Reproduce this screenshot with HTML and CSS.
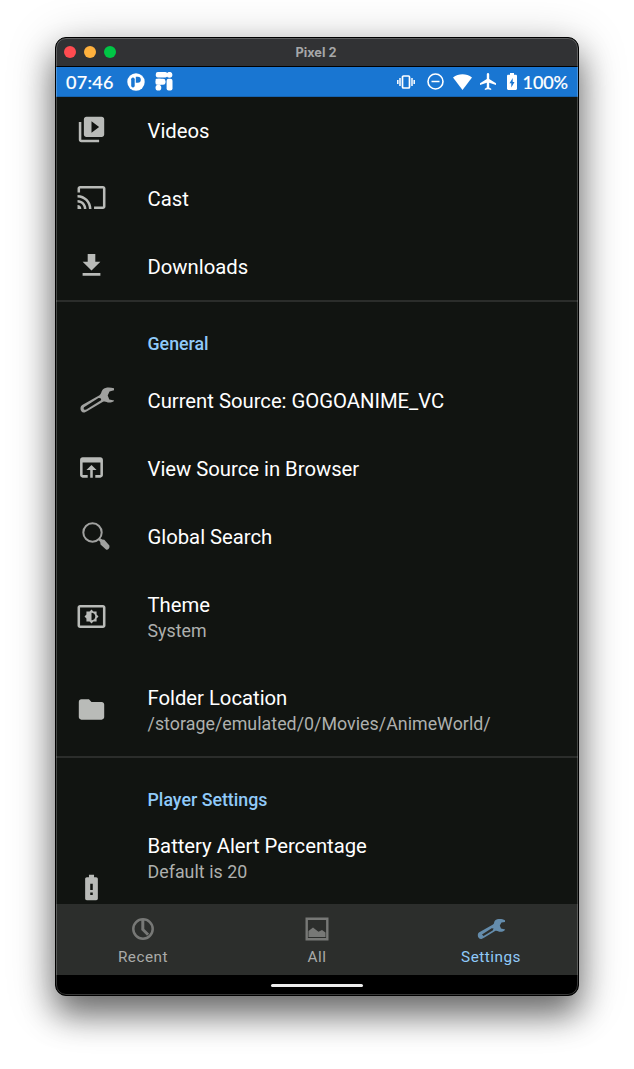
FILE: index.html
```html
<!DOCTYPE html>
<html lang="en">
<head>
<meta charset="utf-8">
<title>Pixel 2</title>
<link rel="stylesheet" href="styles.css">
</head>
<body>
<div class="window">
  <header class="titlebar">
    <div class="lights"><i class="red"></i><i class="amber"></i><i class="green"></i></div>
    <span class="title">Pixel 2</span>
  </header>
  <div class="status">
    <span class="clock">07:46</span>
    <svg class="s-app" width="18" height="18" viewBox="0 0 18 18"><circle cx="9" cy="9" r="8.7" fill="#fff"/><rect x="4.200" y="4.500" width="3.500" height="10" rx="1.700" fill="#1976d2"/><path d="M8.800 3.800h2a3 3 0 0 1 0 6H8.800z" fill="#1976d2"/></svg>
    <svg class="s-pi" width="18" height="19" viewBox="0 0 18 19" fill="#fff"><rect x=".8" y="0" width="11.500" height="5.600" rx="2"/><circle cx="14.500" cy="2.800" r="2.900"/><rect x=".8" y="6.800" width="9.700" height="6" rx="2.400"/><rect x=".6" y="6.800" width="5.600" height="5.800" rx="1"/><circle cx="3.400" cy="15.700" r="2.900"/><rect x="11.600" y="6.800" width="5.900" height="11.700" rx="2"/></svg>
    <span class="spacer"></span>
    <svg class="s-vib" width="18" height="16" viewBox="0 0 18 16" fill="none" stroke="#fff"><rect x="5.500" y="2" width="7" height="12" rx="1" stroke-width="1.700"/><path d="M3 4v8M15 4v8M.8 6v4M17.200 6v4" stroke-width="1.500"/></svg>
    <svg class="s-dnd" width="17" height="17" viewBox="0 0 17 17" fill="none" stroke="#fff" stroke-width="1.600"><circle cx="8.500" cy="8.500" r="7.500"/><path d="M4.500 8.500h8"/></svg>
    <svg class="s-wifi" width="19" height="16" viewBox="0 0 19 16" fill="#fff"><path d="M9.500 16 0 3.500C5.500-.8 13.500-.8 19 3.500z"/></svg>
    <svg class="s-air" width="16" height="17" viewBox="2 2 20 20" preserveAspectRatio="none" fill="#fff"><path d="M22 16v-2l-8.500-5V3.500C13.500 2.700 12.800 2 12 2s-1.500.7-1.500 1.500V9L2 14v2l8.500-2.500V19L8 20.500V22l4-1 4 1v-1.500L13.500 19v-5.500z"/></svg>
    <svg class="s-bat" width="10" height="17" viewBox="7 2 10 20" preserveAspectRatio="none" fill="#fff"><path d="M15.670 4H14V2h-4v2H8.330C7.600 4 7 4.600 7 5.330v15.330C7 21.400 7.600 22 8.330 22h7.330c.74 0 1.340-.6 1.340-1.330V5.330C17 4.600 16.400 4 15.670 4zM11.300 19v-4.800H9.500L12.700 8v4.700h1.800L11.300 19z"/></svg>
    <span class="pct">100%</span>
  </div>
  <main class="list">
    <section>
      <div class="row"><svg class="ic" viewBox="-.2 -.2 24.4 24.4"><path d="M4 6H2v14c0 1.100.9 2 2 2h14v-2H4V6zm16-4H8c-1.100 0-2 .9-2 2v12c0 1.100.9 2 2 2h12c1.100 0 2-.9 2-2V4c0-1.100-.9-2-2-2zm-8 12.500v-9l6 4.500-6 4.500z"/></svg><p class="name">Videos</p></div>
      <div class="row"><svg class="ic" viewBox="-.2 -.2 24.4 24.4"><path d="M21 3H3c-1.100 0-2 .9-2 2v3h2V5h18v14h-7v2h7c1.100 0 2-.9 2-2V5c0-1.100-.9-2-2-2zM1 18v3h3c0-1.660-1.340-3-3-3zm0-4v2c2.760 0 5 2.240 5 5h2c0-3.870-3.130-7-7-7zm0-4v2c4.970 0 9 4.030 9 9h2c0-6.080-4.930-11-11-11z"/></svg><p class="name">Cast</p></div>
      <div class="row"><svg class="ic" viewBox="-.2 -.2 24.4 24.4"><path d="M19 9h-4V3H9v6H5l7 7 7-7zM5 18v2h14v-2z"/></svg><p class="name">Downloads</p></div>
    </section>
    <section class="ruled">
      <h2>General</h2>
      <div class="row"><svg class="wrench" width="35" height="26" viewBox="0 0 35 26"><path fill-rule="evenodd" d="M34 1.300C30 .2 25.500 0 22.800 2.500 21 4.500 21.500 7 19.500 8.200L2.200 18C-1 20 .5 26.300 4.500 25.500L7 24.300 23 14.700C25.500 13.800 27 15.500 29 15.500 31.500 15.500 33.500 15 34.200 13.500L29.300 12.500 27.700 8.500 29.500 4.500 34 3.200zM4 20.300 18.500 11Q21.800 10.800 21 13.300L6.300 22.400Q2.700 23.500 4 20.300z"/></svg><p class="name">Current Source: GOGOANIME_VC</p></div>
      <div class="row"><svg class="ic" viewBox="-.2 -.2 24.4 24.4"><path d="M19 4H5c-1.110 0-2 .9-2 2v12c0 1.100.89 2 2 2h4v-2H5V8h14v10h-4v2h4c1.100 0 2-.9 2-2V6c0-1.100-.89-2-2-2zm-7 6l-4 4h3v6h2v-6h3l-4-4z"/></svg><p class="name">View Source in Browser</p></div>
      <div class="row"><svg class="magnifier" width="28" height="28" viewBox="0 0 28 28"><circle cx="10.500" cy="10.500" r="9.200" fill="none" stroke="#a0a19f" stroke-width="2"/><path d="M16 17.200 17.500 16 20.300 17.500 22.300 17.800 27.400 23.500C28 26 26.300 27.900 24.300 27.700L18.500 22.500 18.200 20z"/></svg><p class="name">Global Search</p></div>
      <div class="row tall"><svg class="ic" viewBox="-.2 -.2 24.4 24.4"><path d="M21 3H3c-1.100 0-2 .9-2 2v14c0 1.100.9 2 2 2h18c1.100 0 2-.9 2-2V5c0-1.100-.9-2-2-2zm0 16.010H3V4.990h18v14.020zM8 16h2.500l1.500 1.500 1.500-1.500H16v-2.500l1.500-1.500-1.500-1.500V8h-2.500L12 6.500 10.500 8H8v2.500L6.500 12 8 13.500V16zm4-7c1.660 0 3 1.340 3 3s-1.340 3-3 3V9z"/></svg><div><p class="name">Theme</p><p class="sub">System</p></div></div>
      <div class="row tall"><svg class="ic" viewBox="-.2 -.2 24.4 24.4"><path d="M10 4H4c-1.100 0-1.990.9-1.990 2L2 18c0 1.100.9 2 2 2h16c1.100 0 2-.9 2-2V8c0-1.100-.9-2-2-2h-8l-2-2z"/></svg><div><p class="name">Folder Location</p><p class="sub">/storage/emulated/0/Movies/AnimeWorld/</p></div></div>
    </section>
    <section class="ruled">
      <h2>Player Settings</h2>
      <div class="row alert"><svg class="ic" viewBox="-.2 -.2 24.4 24.4"><path d="M15.670 4H14V2h-4v2H8.330C7.600 4 7 4.600 7 5.330v15.330C7 21.400 7.600 22 8.330 22h7.330c.74 0 1.340-.6 1.340-1.330V5.330C17 4.600 16.400 4 15.670 4zM13 18h-2v-2h2v2zm0-4h-2V9h2v5z"/></svg><div><p class="name">Battery Alert Percentage</p><p class="sub">Default is 20</p></div></div>
    </section>
  </main>
  <nav class="tabs">
    <div class="tab"><svg width="24" height="24" viewBox="0 0 24 24" fill="none" stroke="#777876"><circle cx="12" cy="12" r="9.700" stroke-width="2.500"/><path d="M11.800 3v9.500l5.300 5.300" stroke-width="3"/></svg><span>Recent</span></div>
    <div class="tab"><svg width="24" height="24" viewBox="0 0 24 24"><path d="M1.700 1.700h20.600v20.600H1.700z" fill="none" stroke="#777876" stroke-width="2.400"/><path d="M3.500 20V14L8 10.500 10.500 12.500 13.500 14.800 17 13 20.500 15.500V20z" fill="#777876"/></svg><span>All</span></div>
    <div class="tab active"><svg width="29" height="24" viewBox="0 0 29 24"><path fill="#648cac" fill-rule="evenodd" d="M28 3.200C25 1.500 20 1.600 18.300 3.200 16.800 4.500 17.500 6.500 16 7.500L2.300 15.200C-.5 17 .8 22.400 4.500 22L7 20.800 18.500 13.800C20.500 13.300 21.500 15 23.500 14.800 25.500 14.800 27.500 14.200 28.200 12.500L24 11.500 22.800 8.500 24.500 5.500 28 5zM5 17.400 14.700 11.200 16.600 11.600 15.700 13.400 6.500 19z"/></svg><span>Settings</span></div>
  </nav>
  <footer class="gesture"><i></i></footer>
</div>
</body>
</html>
```
FILE: styles.css
```css
* { box-sizing: border-box; }
body { margin: 0; background: #fff; font-family: Roboto, "Liberation Sans", sans-serif; height: 1069px; overflow: hidden; padding: 37px 55px 0; }
p, h2 { margin: 0; font-weight: 400; white-space: nowrap; }
svg { display: block; flex: none; }
.window { width: 524px; height: 959px; border: 1px solid #000; border-radius: 11px; overflow: hidden; display: flex; flex-direction: column; background: #111411; position: relative; box-shadow: 0 19px 32px rgba(0,0,0,.48), 0 8px 48px rgba(0,0,0,.26); }
.window::after { content: ""; position: absolute; inset: 0; border: 1px solid rgba(255,255,255,.22); border-radius: 10px; pointer-events: none; }
.titlebar { height: 29px; flex: none; background: #313234; border-bottom: 1px solid #000; display: grid; grid-template-columns: 1fr auto 1fr; align-items: center; }
.lights { display: flex; gap: 8px; padding-left: 8px; }
.lights i { width: 12px; height: 12px; border-radius: 50%; }
.red { background: #ff4b50; }
.amber { background: #ffb13d; }
.green { background: #00c645; }
.title { font: 700 12.800px Inter, sans-serif; color: #a6a7a8; padding-right: 2px; }
.status { height: 30px; flex: none; background: #1976d2; border-bottom: 1px solid #1663b0; color: #fff; display: flex; align-items: center; padding: 0 10px 0 10px; }
.clock, .pct { font: 500 18px/30px Lato, sans-serif; -webkit-text-stroke: .15px #fff; }
.clock { width: 61px; letter-spacing: .3px; }
.pct { letter-spacing: -.1px; }
.s-pi { margin-left: 10px; }
.spacer { flex: 1; }
.s-dnd { margin-left: 12px; }
.s-wifi { margin-left: 9px; }
.s-air { margin-left: 8px; }
.s-bat { margin: 0 6px 0 11px; }
.list { height: 807px; flex: none; overflow: hidden; color: #fff; }
.row { height: 68px; display: grid; grid-template-columns: 91.500px 1fr; align-items: center; fill: #b9bbb8; }
.ic { width: 31px; height: 31px; margin: -3px 0 0 20px; }
.tall .ic { margin-top: -2px; }
.wrench { margin: -3px 0 0 24px; fill: #a0a19f; }
.magnifier { margin: -3px 0 0 26px; fill: #a0a19f; }
.name { font-size: 20.300px; line-height: 26px; letter-spacing: -.02px; }
.sub { font-size: 17.800px; line-height: 26px; color: #aeb0ae; letter-spacing: .04px; }
.tall { height: 93px; }
.ruled { position: relative; }
.ruled::before { content: ""; position: absolute; left: 0; right: 0; top: -1px; height: 2px; background: #2b2d2b; }
h2 { height: 66px; padding: 30px 0 0 91.500px; font-size: 17.800px; line-height: 26px; font-weight: 500; color: #90caf9; }
.alert { height: 130px; align-items: start; padding-top: 10px; }
.alert .ic { margin-top: 39px; }
.tabs { height: 71px; flex: none; background: #2c2e2c; display: grid; grid-template-columns: repeat(3, 1fr); color: #aaaba9; }
.tab { display: flex; flex-direction: column; align-items: center; padding-top: 13px; }
.tab span { font-size: 15.300px; line-height: 20px; margin-top: 6px; letter-spacing: .5px; }
.active { color: #90caf9; }
.gesture { flex: 1; background: #000; display: flex; justify-content: center; padding-top: 9px; }
.gesture i { width: 92px; height: 3px; border-radius: 2px; background: #eee; }
```
